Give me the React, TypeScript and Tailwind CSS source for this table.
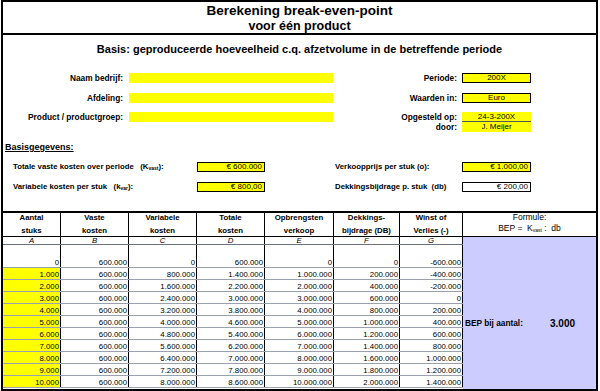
import React from 'react';

const fmt = (n: number) => {
  const s = Math.abs(n).toString().replace(/\B(?=(\d{3})+(?!\d))/g, '.');
  return n < 0 ? '-' + s : s;
};

const widths = ['w-[58px]', 'w-[68px]', 'w-[68px]', 'w-[68px]', 'w-[69px]', 'w-[66px]', 'w-[63px]'];

const headers: [string, string][] = [
  ['Aantal', 'stuks'],
  ['Vaste', 'kosten'],
  ['Variabele', 'kosten'],
  ['Totale', 'kosten'],
  ['Opbrengsten', 'verkoop'],
  ['Dekkings-', 'bijdrage (DB)'],
  ['Winst of', 'Verlies (-)'],
];

const letters = ['A', 'B', 'C', 'D', 'E', 'F', 'G'];

const rows = Array.from({ length: 11 }, (_, i) => {
  const n = i * 1000;
  return [n, 600000, 800 * n, 600000 + 800 * n, 1000 * n, 200 * n, 200 * n - 600000];
});

function InfoBar({ children, boxed, className = '' }: { children?: React.ReactNode; boxed?: boolean; className?: string }) {
  return (
    <div
      className={`w-[69px] h-[10px] ml-[5px] bg-[#ffff00] flex items-center justify-center text-[8px] leading-none ${
        boxed ? 'border border-black' : ''
      } ${className}`}
    >
      {children}
    </div>
  );
}

export default function App() {
  return (
    <div className="w-[597px] h-[391px] ml-[1px] border-2 border-black bg-white flex flex-col font-['Liberation_Sans',Arial,sans-serif] text-black overflow-hidden">
      {/* Title */}
      <div className="h-[33px] border-b-2 border-black pt-[1px] flex flex-col items-center font-bold">
        <div className="text-[13.5px] leading-[16px]">Berekening break-even-point</div>
        <div className="text-[12.5px] leading-[14px]">voor één product</div>
      </div>

      {/* Basis */}
      <div className="h-[28px] flex items-center justify-center text-[11px] font-bold">
        Basis: geproduceerde hoeveelheid c.q. afzetvolume in de betreffende periode
      </div>

      {/* Company info */}
      <div className="flex flex-col text-[8.3px] font-bold">
        <div className="mt-[10px] h-[10px] flex items-center">
          <div className="w-[120px] text-right">Naam bedrijf:</div>
          <div className="w-[204px] h-[10px] ml-[6px] bg-[#ffff00]" />
          <div className="w-[124px] text-right">Periode:</div>
          <InfoBar boxed>
            <span className="font-normal">200X</span>
          </InfoBar>
        </div>
        <div className="mt-[10px] h-[10px] flex items-center">
          <div className="w-[120px] text-right">Afdeling:</div>
          <div className="w-[204px] h-[10px] ml-[6px] bg-[#ffff00]" />
          <div className="w-[124px] text-right">Waarden in:</div>
          <InfoBar boxed>
            <span className="font-normal">Euro</span>
          </InfoBar>
        </div>
        <div className="mt-[9px] h-[10px] flex items-center">
          <div className="w-[120px] text-right">Product / productgroep:</div>
          <div className="w-[204px] h-[10px] ml-[6px] bg-[#ffff00]" />
          <div className="w-[124px] text-right">Opgesteld op:</div>
          <InfoBar className="border-b border-[#555]">
            <span className="font-normal">24-3-200X</span>
          </InfoBar>
        </div>
        <div className="h-[10px] flex items-center">
          <div className="w-[330px]" />
          <div className="w-[124px] text-right">door:</div>
          <InfoBar>
            <span className="font-normal">J. Meijer</span>
          </InfoBar>
        </div>
      </div>

      {/* Basisgegevens */}
      <div className="mt-[9px] ml-[2px] leading-[12px] text-[9px] font-bold underline">Basisgegevens:</div>
      <div className="flex flex-col text-[7.8px] font-bold">
        <div className="mt-[9px] h-[10px] flex items-center">
          <div className="w-[194px] pl-[10px]">
            Totale vaste kosten over periode&nbsp;&nbsp;&nbsp;(K<sub className="text-[5px]">vast</sub>):
          </div>
          <div className="w-[68px] h-[10px] bg-[#ffff00] border border-black flex items-center justify-end pr-[2px] text-[8px] font-normal">
            € 600.000
          </div>
          <div className="w-[70px]" />
          <div className="w-[127px]">Verkoopprijs per stuk (o):</div>
          <div className="w-[69px] h-[10px] bg-[#ffff00] border border-black flex items-center justify-end pr-[2px] text-[8px] font-normal">
            € 1.000,00
          </div>
        </div>
        <div className="mt-[10px] h-[10px] flex items-center">
          <div className="w-[194px] pl-[10px]">
            Variabele kosten per stuk&nbsp;&nbsp;&nbsp;(k<sub className="text-[5px]">var</sub>):
          </div>
          <div className="w-[68px] h-[10px] bg-[#ffff00] border border-black flex items-center justify-end pr-[2px] text-[8px] font-normal">
            € 800,00
          </div>
          <div className="w-[70px]" />
          <div className="w-[127px]">Dekkingsbijdrage p. stuk&nbsp;&nbsp;(db)</div>
          <div className="w-[69px] h-[10px] bg-white border border-black flex items-center justify-end pr-[2px] text-[8px] font-normal">
            € 200,00
          </div>
        </div>
      </div>

      {/* Table */}
      <div className="mt-[19px] flex-1 border-t-2 border-black flex">
        <div className="flex flex-col">
          <div className="h-[24px] flex border-b border-black">
            {headers.map(([a, b], i) => (
              <div
                key={i}
                className={`${widths[i]} border-r border-black flex flex-col items-center text-[7.8px] font-bold`}
              >
                <div className="leading-[8px] mt-[1px]">{a}</div>
                <div className="leading-[8px] mt-[5px]">{b}</div>
              </div>
            ))}
          </div>
          <div className="h-[8px] flex border-b border-gray-500">
            {letters.map((l, i) => (
              <div
                key={l}
                className={`${widths[i]} border-r border-black flex items-center justify-center text-[7.8px] italic leading-none`}
              >
                {l}
              </div>
            ))}
          </div>
          {rows.map((r, ri) => (
            <div
              key={ri}
              className={`${ri === 0 ? 'h-[23px]' : 'h-[12px]'} flex border-b border-gray-400`}
            >
              {r.map((v, ci) => (
                <div
                  key={ci}
                  className={`${widths[ci]} border-r border-black flex items-end justify-end pr-[1px] text-[7.8px] leading-[9px] ${
                    ci === 0 && ri > 0 ? 'bg-[#ffff00]' : ''
                  }`}
                >
                  {fmt(v)}
                </div>
              ))}
            </div>
          ))}
        </div>

        {/* Formula column */}
        <div className="w-[133px] flex flex-col">
          <div className="h-[24px] border-b border-black flex flex-col items-center text-[8.5px]">
            <div className="leading-[9px]">Formule:</div>
            <div className="leading-[9px] mt-[2px]">
              BEP =&nbsp; K<sub className="text-[5px]">vast</sub>&nbsp;:&nbsp; db
            </div>
          </div>
          <div className="flex-1 bg-[#ccccff] pt-[80px]">
            <div className="h-[12px] flex items-center font-bold">
              <span className="w-[87px] pl-[2px] text-[8.3px]">BEP bij aantal:</span>
              <span className="text-[10px]">3.000</span>
            </div>
          </div>
        </div>
      </div>
    </div>
  );
}
